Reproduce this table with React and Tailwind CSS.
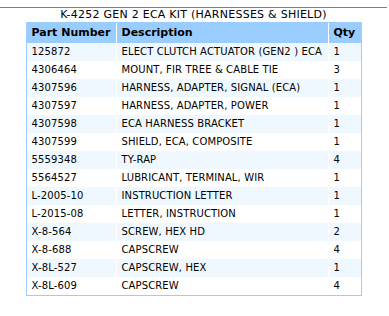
const parts = [
  ['125872', 'ELECT CLUTCH ACTUATOR (GEN2 ) ECA', '1'],
  ['4306464', 'MOUNT, FIR TREE & CABLE TIE', '3'],
  ['4307596', 'HARNESS, ADAPTER, SIGNAL (ECA)', '1'],
  ['4307597', 'HARNESS, ADAPTER, POWER', '1'],
  ['4307598', 'ECA HARNESS BRACKET', '1'],
  ['4307599', 'SHIELD, ECA, COMPOSITE', '1'],
  ['5559348', 'TY-RAP', '4'],
  ['5564527', 'LUBRICANT, TERMINAL, WIR', '1'],
  ['L-2005-10', 'INSTRUCTION LETTER', '1'],
  ['L-2015-08', 'LETTER, INSTRUCTION', '1'],
  ['X-8-564', 'SCREW, HEX HD', '2'],
  ['X-8-688', 'CAPSCREW', '4'],
  ['X-8L-527', 'CAPSCREW, HEX', '1'],
  ['X-8L-609', 'CAPSCREW', '4'],
]

function App() {
  return (
    <div className="pt-[7px] font-['DejaVu_Sans',Verdana,sans-serif] text-black">
      <div className="w-[387px] border-t border-[#808080]">
        <div className="text-center text-[11px] leading-[14px] tracking-[0.25px]">
          K-4252 GEN 2 ECA KIT (HARNESSES &amp; SHIELD)
        </div>
        <div className="mx-auto w-[336px] border border-[#99ccff]">
          <div className="grid grid-cols-[89px_211px_32px] gap-x-px bg-white">
            <div className="h-[20px] bg-[#99ccff] pl-[5px] text-[11px] font-bold leading-[20px]">Part Number</div>
            <div className="h-[20px] bg-[#99ccff] pl-[5px] text-[11px] font-bold leading-[20px]">Description</div>
            <div className="h-[20px] bg-[#99ccff] pl-[5px] text-[11px] font-bold leading-[20px]">Qty</div>
            {parts.map((p, i) => (
              [0, 1, 2].map(c => (
                <div
                  key={i + '-' + c}
                  className={(i % 2 === 0 ? 'bg-[#f0f8ff] ' : 'bg-white ') + 'h-[18px] whitespace-nowrap pl-[5px] text-[10px] leading-[18px] tracking-[0.12px]'}
                >
                  {p[c]}
                </div>
              ))
            ))}
          </div>
        </div>
      </div>
    </div>
  )
}

export default App
